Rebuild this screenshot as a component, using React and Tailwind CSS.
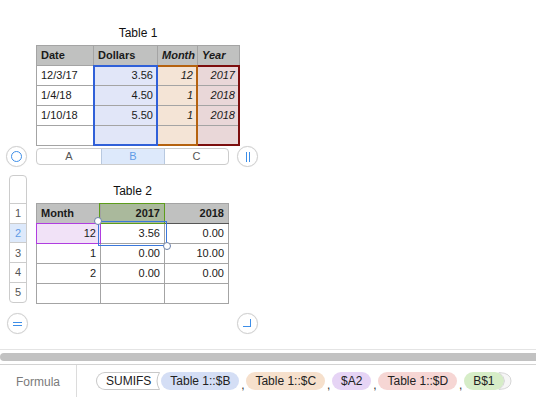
import React from 'react';

const font = { fontFamily: '"Liberation Sans", Arial, sans-serif' };

function Outline({ className }) {
  return <div className={`absolute pointer-events-none ${className}`} />;
}

function Cell({ children, className = '' }) {
  return (
    <div className={`h-[19px] flex items-center px-[4px] text-[11px] text-[#1a1a1a] ${className}`}>
      {children}
    </div>
  );
}

function Table1() {
  const rows = [
    ['12/3/17', '3.56', '12', '2017'],
    ['1/4/18', '4.50', '1', '2018'],
    ['1/10/18', '5.50', '1', '2018'],
    ['', '', '', ''],
  ];
  return (
    <div className="relative ml-[36px] w-[204px]">
      <div className="grid grid-cols-[56px_63px_39px_41px] gap-px bg-[#a4a4a4] p-px">
        <Cell className="bg-[#c0c1c0] font-bold text-[10px]">Date</Cell>
        <Cell className="bg-[#c0c1c0] font-bold text-[10px]">Dollars</Cell>
        <Cell className="bg-[#c0c1c0] font-bold italic text-[10px]">Month</Cell>
        <Cell className="bg-[#c0c1c0] font-bold italic text-[10px]">Year</Cell>
        {rows.map((r, i) => (
          <React.Fragment key={i}>
            <Cell className="bg-white">{r[0]}</Cell>
            <Cell className="bg-[#e1e6f8] justify-end">{r[1]}</Cell>
            <Cell className="bg-[#f4e4d6] justify-end italic">{r[2]}</Cell>
            <Cell className="bg-[#e9d7d8] justify-end italic">{r[3]}</Cell>
          </React.Fragment>
        ))}
      </div>
      <Outline className="left-[57px] top-[20px] w-[65px] h-[81px] border-2 border-[#3060d8]" />
      <Outline className="left-[122px] top-[20px] w-[40px] h-[81px] border-2 border-[#b5620f] border-l-0" />
      <Outline className="left-[162px] top-[20px] w-[42px] h-[81px] border-2 border-[#7c0e0e] border-l-0" />
    </div>
  );
}

function Table2() {
  const rows = [
    ['12', '3.56', '0.00'],
    ['1', '0.00', '10.00'],
    ['2', '0.00', '0.00'],
    ['', '', ''],
  ];
  return (
    <div className="relative w-[193px]">
      <div className="grid grid-cols-[63px_63px_63px] gap-px bg-[#a4a4a4] p-px">
        <Cell className="bg-[#c0c1c0] font-bold text-[10px]">Month</Cell>
        <Cell className="bg-[#aab99c] font-bold text-[10px] justify-end">2017</Cell>
        <Cell className="bg-[#c0c1c0] font-bold text-[10px] justify-end">2018</Cell>
        {rows.map((r, i) => (
          <React.Fragment key={i}>
            <Cell className={`justify-end ${i === 0 ? 'bg-[#f1e2f7]' : 'bg-white'}`}>{r[0]}</Cell>
            <Cell className="bg-white justify-end">{r[1]}</Cell>
            <Cell className="bg-white justify-end">{r[2]}</Cell>
          </React.Fragment>
        ))}
      </div>
      <div className="absolute left-0 top-[20px] w-[193px] h-px bg-[#555]" />
      <Outline className="left-[63px] top-0 w-[66px] h-[21px] border border-[#5d9c1c]" />
      <Outline className="left-0 top-[20px] w-[65px] h-[21px] border-[1.5px] border-[#b03de0]" />
      <Outline className="left-[62px] top-[18px] w-[69px] h-[25px] border border-[#3b78dc]" />
      <div className="absolute left-[58px] top-[14px] w-[8px] h-[8px] rounded-full bg-white border border-[#6b7fa8]" />
      <div className="absolute left-[127px] top-[39px] w-[8px] h-[8px] rounded-full bg-white border border-[#6b7fa8]" />
    </div>
  );
}

function RoundButton({ children }) {
  return (
    <div className="w-[21px] h-[21px] rounded-full border border-[#cfcfcf] bg-white flex items-center justify-center shadow-[0_0_1px_rgba(0,0,0,0.1)]">
      {children}
    </div>
  );
}

function Pill({ children, color }) {
  return (
    <span className={`h-[18px] px-[9px] rounded-full flex items-center text-[12px] text-[#222] ${color}`}>
      {children}
    </span>
  );
}

function Comma() {
  return <span className="w-[7px] text-center text-[12px] text-[#333] leading-none mt-[8px]">,</span>;
}

export default function App() {
  return (
    <div className="w-[536px] h-[397px] bg-white flex flex-col overflow-hidden" style={font}>
      <div className="pt-[24px] pl-[36px] w-[240px] h-[45px] text-center text-[12px] text-[#111]">Table 1</div>
      <Table1 />

      <div className="mt-[2px] flex items-center h-[17px]">
        <div className="ml-[6px]">
          <RoundButton>
            <div className="w-[11px] h-[11px] rounded-full border-[1.5px] border-[#3d8ee8]" />
          </RoundButton>
        </div>
        <div className="ml-[9px] w-[193px] h-[17px] flex rounded-[4px] border border-[#cccccc] overflow-hidden text-[11px] text-[#555]">
          <div className="w-[64px] flex items-center justify-center">A</div>
          <div className="w-[64px] flex items-center justify-center bg-[#dde9fb] text-[#5f9be6] border-x border-[#b8c9e0]">B</div>
          <div className="flex-1 flex items-center justify-center">C</div>
        </div>
        <div className="ml-[8px]">
          <RoundButton>
            <div className="flex gap-[2px]">
              <div className="w-px h-[10px] bg-[#3d8ee8]" />
              <div className="w-px h-[10px] bg-[#3d8ee8]" />
            </div>
          </RoundButton>
        </div>
      </div>

      <div className="mt-[10px] flex">
        <div className="ml-[9px] w-[18px] h-[128px] rounded-[4px] border border-[#cccccc] flex flex-col text-[11px] text-[#555] overflow-hidden">
          <div className="h-[27px]" />
          {['1', '2', '3', '4', '5'].map((n) => (
            <div
              key={n}
              className={`h-[20px] flex items-center justify-center border-t border-[#cccccc] ${n === '2' ? 'bg-[#dde9fb] text-[#5f9be6]' : ''}`}
            >
              {n}
            </div>
          ))}
        </div>
        <div className="ml-[9px] flex flex-col">
          <div className="h-[28px] pt-[7px] text-center text-[12px] text-[#111] w-[193px]">Table 2</div>
          <Table2 />
        </div>
      </div>

      <div className="mt-[9px] flex items-center">
        <div className="ml-[7px]">
          <RoundButton>
            <div className="flex flex-col gap-[2px]">
              <div className="w-[9px] h-px bg-[#3d8ee8]" />
              <div className="w-[9px] h-px bg-[#3d8ee8]" />
            </div>
          </RoundButton>
        </div>
        <div className="ml-[209px]">
          <RoundButton>
            <div className="w-[8px] h-[8px] border-r border-b border-[#3d8ee8] -translate-x-px -translate-y-px" />
          </RoundButton>
        </div>
      </div>

      <div className="flex-1" />
      <div className="h-px bg-[#e4e4e4]" />
      <div className="h-[3px]" />
      <div className="h-[8px] bg-[#c2c2c2] rounded-l-full" />
      <div className="h-[3px]" />
      <div className="h-px bg-[#d3d3d3]" />
      <div className="h-[32px] flex items-stretch">
        <div className="w-[77px] pt-px flex items-center justify-center text-[12px] text-[#7a7a7a] border-r border-[#dcdcdc]">Formula</div>
        <div className="flex items-center pl-[19px] text-[12px] text-[#333]">
          <span className="h-[18px] pl-[9px] pr-[4px] rounded-l-full border-y border-l border-[#c8c8c8] flex items-center text-[12px] text-[#222]">SUMIFS</span>
          <svg width="6" height="18" viewBox="0 0 6 18" className="-ml-px">
            <path d="M5.5 0.5 Q0.5 9 5.5 17.5" fill="none" stroke="#c8c8c8" strokeWidth="1" />
            <path d="M0 0.5 H5.5 M0 17.5 H5.5" stroke="#c8c8c8" strokeWidth="1" />
          </svg>
          <span className="ml-[1px]"><Pill color="bg-[#d4def5]">Table 1::$B</Pill></span>
          <Comma />
          <Pill color="bg-[#f6e0cc]">Table 1::$C</Pill>
          <Comma />
          <Pill color="bg-[#e6d4f5]">$A2</Pill>
          <Comma />
          <Pill color="bg-[#f6d6d4]">Table 1::$D</Pill>
          <Comma />
          <Pill color="bg-[#d6edc7]">B$1</Pill>
          <svg width="14" height="18" viewBox="0 0 14 18" className="-ml-[6px]">
            <path d="M1 0.5 Q12 9 1 17.5 Q13 17 13 9 Q13 1 1 0.5 Z" fill="#f6f6f6" stroke="#d6d6d6" strokeWidth="1" />
          </svg>
        </div>
      </div>
    </div>
  );
}
